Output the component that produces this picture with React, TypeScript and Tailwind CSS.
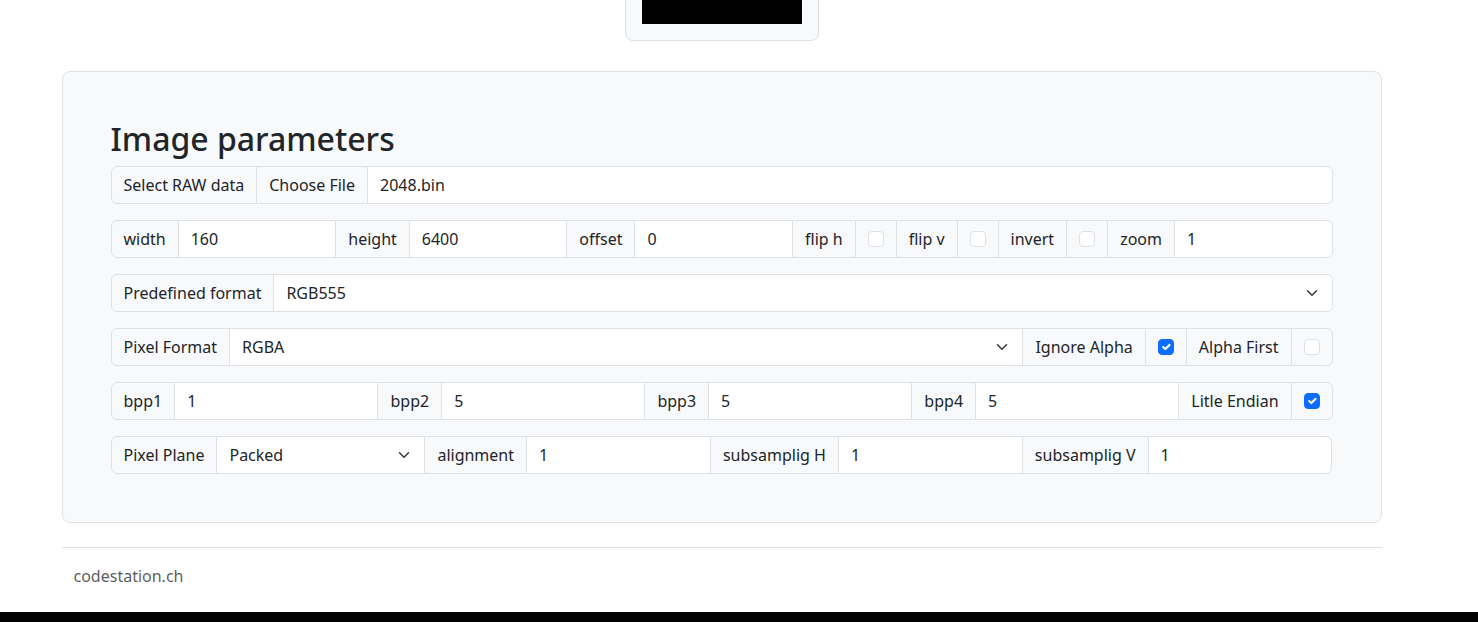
import { useRef, useState } from "react";
import type { ReactNode } from "react";

const cell = "border border-[#dee2e6] -ml-px first:ml-0 first:rounded-l-md last:rounded-r-md";

function Row({ children }: { children: ReactNode }) {
  return <div className="flex h-[38px] items-stretch">{children}</div>;
}

function Tag({ htmlFor, children }: { htmlFor: string; children: ReactNode }) {
  return (
    <label htmlFor={htmlFor} className={`${cell} flex items-center whitespace-nowrap bg-[#f8f9fa] px-3`}>
      {children}
    </label>
  );
}

function NumberField({ id, label, value }: { id: string; label: string; value: number }) {
  return (
    <>
      <Tag htmlFor={id}>{label}</Tag>
      <input
        id={id}
        type="number"
        defaultValue={value}
        className={`${cell} min-w-0 flex-1 bg-white px-3 outline-none focus:border-[#86b7fe]`}
      />
    </>
  );
}

function CheckField({ id, label, checked = false }: { id: string; label: string; checked?: boolean }) {
  return (
    <>
      <Tag htmlFor={id}>{label}</Tag>
      <div className={`${cell} flex items-center bg-[#f8f9fa] px-3`}>
        <span className="relative flex size-4">
          <input
            id={id}
            type="checkbox"
            defaultChecked={checked}
            className="peer size-4 appearance-none rounded border border-[#dee2e6] bg-white checked:border-[#0d6efd] checked:bg-[#0d6efd]"
          />
          <svg
            viewBox="0 0 20 20"
            className="pointer-events-none invisible absolute inset-px size-[14px] peer-checked:visible"
            fill="none"
            stroke="#fff"
            strokeWidth="3"
            strokeLinecap="round"
            strokeLinejoin="round"
            aria-hidden="true"
          >
            <path d="m6 10 3 3 6-6" />
          </svg>
        </span>
      </div>
    </>
  );
}

function SelectField({ id, label, options }: { id: string; label: string; options: string[] }) {
  return (
    <>
      <Tag htmlFor={id}>{label}</Tag>
      <div className={`${cell} relative flex min-w-0 grow basis-[50px] overflow-hidden bg-white`}>
        <select id={id} className="w-full appearance-none bg-white pl-3 pr-9 outline-none">
          {options.map((option) => (
            <option key={option}>{option}</option>
          ))}
        </select>
        <svg
          viewBox="0 0 16 16"
          className="pointer-events-none absolute right-3 top-3 h-3 w-4"
          fill="none"
          stroke="#343a40"
          strokeWidth="2"
          strokeLinecap="round"
          strokeLinejoin="round"
          aria-hidden="true"
        >
          <path d="m2 5 6 6 6-6" />
        </svg>
      </div>
    </>
  );
}

function FileField() {
  const picker = useRef<HTMLInputElement>(null);
  const [name, setName] = useState("2048.bin");
  return (
    <>
      <input
        ref={picker}
        id="raw"
        type="file"
        hidden
        onChange={(event) => setName(event.target.files?.[0]?.name ?? name)}
      />
      <Row>
        <Tag htmlFor="raw">Select RAW data</Tag>
        <button
          type="button"
          onClick={() => picker.current?.click()}
          className={`${cell} whitespace-nowrap bg-[#f8f9fa] px-3`}
        >
          Choose File
        </button>
        <output htmlFor="raw" className={`${cell} flex min-w-0 flex-1 items-center bg-white px-3`}>
          {name}
        </output>
      </Row>
    </>
  );
}

export default function App() {
  return (
    <div className="border-b-10 border-black bg-white pr-[35px] font-['Noto_Sans',sans-serif] text-base text-[#212529]">
      <div className="mx-auto max-w-[1320px]">
        <div className="mx-auto mb-[30px] w-fit rounded-b-lg border border-t-0 border-[#dee2e6] bg-[#f8f9fa] px-4 pb-4">
          <canvas width={160} height={24} className="block bg-black" aria-label="Image preview" />
        </div>

        <main className="mb-6 rounded-lg border border-[#dee2e6] bg-[#f8f9fa] p-12">
          <h2 className="mb-2 text-[32px] font-medium leading-[38px]">Image parameters</h2>
          <form className="flex flex-col gap-4">
            <FileField />
            <Row>
              <NumberField id="width" label="width" value={160} />
              <NumberField id="height" label="height" value={6400} />
              <NumberField id="offset" label="offset" value={0} />
              <CheckField id="fliph" label="flip h" />
              <CheckField id="flipv" label="flip v" />
              <CheckField id="invert" label="invert" />
              <NumberField id="zoom" label="zoom" value={1} />
            </Row>
            <Row>
              <SelectField id="preset" label="Predefined format" options={["RGB555"]} />
            </Row>
            <Row>
              <SelectField id="format" label="Pixel Format" options={["RGBA"]} />
              <CheckField id="ignorealpha" label="Ignore Alpha" checked />
              <CheckField id="alphafirst" label="Alpha First" />
            </Row>
            <Row>
              <NumberField id="bpp1" label="bpp1" value={1} />
              <NumberField id="bpp2" label="bpp2" value={5} />
              <NumberField id="bpp3" label="bpp3" value={5} />
              <NumberField id="bpp4" label="bpp4" value={5} />
              <CheckField id="endian" label="Litle Endian" checked />
            </Row>
            <Row>
              <SelectField id="plane" label="Pixel Plane" options={["Packed"]} />
              <NumberField id="alignment" label="alignment" value={1} />
              <NumberField id="subh" label="subsamplig H" value={1} />
              <NumberField id="subv" label="subsamplig V" value={1} />
            </Row>
          </form>
        </main>

        <footer className="border-t border-[#dee2e6] px-3 pb-6 pt-4 text-[#212529]/75">codestation.ch</footer>
      </div>
    </div>
  );
}
